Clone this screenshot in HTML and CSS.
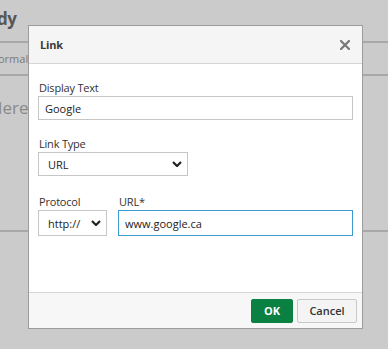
FILE: index.html
```html
<!DOCTYPE html>
<html lang="en">
<head>
    <meta charset="UTF-8">
    <meta name="viewport" content="width=device-width, initial-scale=1.0">
    <title>Link</title>
    <link rel="stylesheet" href="styles.css">
</head>
<body>
    <div class="page">
        <div class="doc-title">dy</div>
        <div class="doc-toolbar">ormal</div>
        <div class="doc-editor">Here</div>
    </div>

    <div class="dialog">
        <div class="dialog-header">
            <span class="dialog-title">Link</span>
            <button class="close-btn" aria-label="Close">
                <svg width="10" height="10" viewBox="0 0 10 10">
                    <path d="M1 1 L9 9 M9 1 L1 9" stroke="#777" stroke-width="2.2" stroke-linecap="square" fill="none"/>
                </svg>
            </button>
        </div>
        <div class="dialog-body">
            <div class="field">
                <label for="displayText">Display Text</label>
                <input type="text" id="displayText" class="text-input" value="Google">
            </div>
            <div class="field">
                <label for="linkType">Link Type</label>
                <div class="select-wrap link-type">
                    <select id="linkType"><option>URL</option></select>
                    <svg class="chevron" width="10" height="6" viewBox="0 0 10 6">
                        <path d="M1 1 L5 5 L9 1" stroke="#222" stroke-width="2.2" fill="none"/>
                    </svg>
                </div>
            </div>
            <div class="field-row">
                <div class="field protocol">
                    <label for="protocol">Protocol</label>
                    <div class="select-wrap">
                        <select id="protocol" class="tall"><option>http://</option></select>
                        <svg class="chevron" width="10" height="6" viewBox="0 0 10 6">
                            <path d="M1 1 L5 5 L9 1" stroke="#222" stroke-width="2.2" fill="none"/>
                        </svg>
                    </div>
                </div>
                <div class="field url">
                    <label for="url">URL*</label>
                    <input type="text" id="url" class="text-input tall focused" value="www.google.ca">
                </div>
            </div>
        </div>
        <div class="dialog-footer">
            <button class="btn btn-ok">OK</button>
            <button class="btn btn-cancel">Cancel</button>
        </div>
    </div>
</body>
</html>
```

FILE: styles.css
```css
/* Página de fondo (oscurecida por el diálogo) */
body {
    margin: 0;
    font-family: "Open Sans", Arial, sans-serif;
    background: #cbcbcb;
    height: 349px;
    overflow: hidden;
    position: relative;
}

.page {
    color: #666;
}

.doc-title {
    height: 41px;
    border-bottom: 2px solid #a8a8a8;
    font-size: 17px;
    font-weight: bold;
    color: #575757;
    line-height: 38px;
    letter-spacing: -0.5px;
    margin-left: -3px;
}

.doc-toolbar {
    height: 31px;
    border-bottom: 2px solid #a8a8a8;
    font-size: 11px;
    line-height: 31px;
    color: #7a7a7a;
    margin-left: -2px;
}

.doc-editor {
    height: 156px;
    border-bottom: 2px solid #a8a8a8;
    font-size: 17px;
    color: #8a8a8a;
    padding-top: 20px;
    box-sizing: border-box;
    margin-left: -10px;
}

/* Diálogo */
.dialog {
    position: absolute;
    top: 25px;
    left: 28px;
    width: 335px;
    height: 304px;
    box-sizing: border-box;
    border: 1px solid #9c9c9c;
    background: #fff;
    display: flex;
    flex-direction: column;
}

.dialog-header {
    height: 37px;
    background: #f5f5f5;
    border-bottom: 1px solid #d6d6d6;
    display: flex;
    align-items: center;
    justify-content: space-between;
    padding: 0 12px 0 11px;
}

.dialog-title {
    font-size: 11px;
    font-weight: bold;
    color: #3a3a3a;
    letter-spacing: -0.2px;
}

.close-btn {
    border: none;
    background: none;
    padding: 0;
    width: 10px;
    height: 10px;
    display: flex;
    cursor: pointer;
}

.dialog-body {
    flex: 1;
    padding: 16px 9px 0 9px;
}

.field {
    margin-bottom: 16px;
}

.field label {
    display: block;
    font-size: 11px;
    line-height: 15px;
    color: #333;
    margin-bottom: 1px;
    padding-left: 1px;
    letter-spacing: -0.2px;
}

.text-input,
select {
    display: block;
    box-sizing: border-box;
    width: 100%;
    height: 24px;
    border: 1px solid #c6c6c6;
    border-radius: 0;
    background: #fff;
    font-family: "Open Sans", Arial, sans-serif;
    font-size: 11px;
    color: #222;
    outline: none;
    margin: 0;
}

.text-input {
    padding: 0 6px;
}

select {
    appearance: none;
    -webkit-appearance: none;
    padding: 0 9px;
}

.tall {
    height: 26px;
}

.focused {
    border-color: #3d9ad1;
}

.select-wrap {
    position: relative;
}

.link-type {
    width: 150px;
}

.chevron {
    position: absolute;
    right: 6px;
    top: 50%;
    margin-top: -3px;
    pointer-events: none;
}

.field-row {
    display: flex;
    gap: 11px;
    padding-top: 2px;
}

.protocol {
    width: 69px;
    flex: none;
}

.url {
    flex: 1;
}

/* Pie con botones */
.dialog-footer {
    height: 35px;
    background: #f7f7f7;
    border-top: 1px solid #d6d6d6;
    display: flex;
    justify-content: flex-end;
    align-items: center;
    gap: 4px;
    padding: 0 5px;
}

.btn {
    height: 24px;
    border-radius: 2px;
    font-family: "Open Sans", Arial, sans-serif;
    font-size: 11px;
    font-weight: 600;
    cursor: pointer;
    padding: 0;
}

.btn-ok {
    width: 42px;
    background: #0a8043;
    border: 1px solid #0a8043;
    color: #fff;
    font-weight: bold;
}

.btn-cancel {
    width: 60px;
    background: #f4f4f4;
    border: 1px solid #c8c8c8;
    color: #333;
}
```
